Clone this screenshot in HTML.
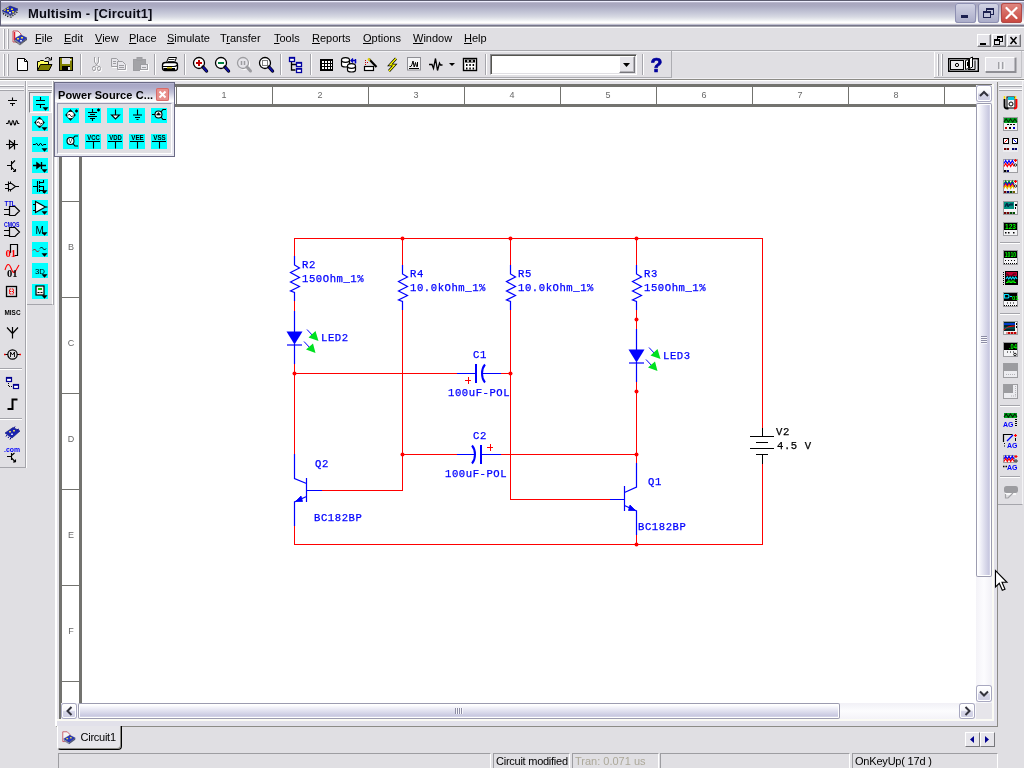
<!DOCTYPE html>
<html lang="en">
<head>
<meta charset="utf-8">
<title>Multisim - [Circuit1]</title>
<style>
html,body{margin:0;padding:0;}
body{width:1024px;height:768px;overflow:hidden;background:#e0dfe3;font-family:"Liberation Sans",sans-serif;font-size:11px;color:#000;position:relative;}
.a{position:absolute;}
#title{left:0;top:0;width:1024px;height:28px;background:linear-gradient(to bottom,#5c5c70 0,#5c5c70 1px,#eeeeff 1px,#eeeeff 2px,#b8b6cc 2px,#b8b6cc 3px,#a8a6be 3px,#abaac2 6px,#b6b7cc 9px,#c6c8d8 13px,#d8dae3 17px,#eceef1 20px,#ffffff 22px,#ffffff 23px,#f0eeee 23px,#f0eeee 24px,#c0c0d0 24px,#c0c0d0 25px,#77778a 25px,#77778a 26px,#a4a4ac 26px,#a4a4ac 27px,#ffffff 27px,#ffffff 28px);}
#title .t{left:28px;top:6px;font-weight:bold;font-size:13px;line-height:16px;white-space:nowrap;color:#0a0a14;letter-spacing:0.150px;}
.menu span{position:absolute;top:32px;line-height:13px;font-size:11px;white-space:nowrap;}
.menu u{text-decoration:underline;text-underline-offset:1px;}
.hl{height:1px;}
.vl{width:1px;}
.mono{font-family:"Liberation Mono",monospace;font-size:11.67px;line-height:12px;white-space:nowrap;color:#0000ff;font-weight:bold;}
.cy{position:absolute;width:16px;height:15px;background:#00ffff;}
.st{position:absolute;top:753px;height:15px;border-top:1px solid #9d9da1;border-left:1px solid #9d9da1;border-right:1px solid #fff;box-sizing:border-box;line-height:14px;padding-left:2px;white-space:nowrap;overflow:hidden;}
.rl{position:absolute;font-size:9px;color:#686868;line-height:10px;text-align:center;width:12px;}
.mb{top:34px;width:14px;height:13px;box-sizing:border-box;background:#e6e5ea;border:1px solid;border-color:#fff #77777c #77777c #fff;box-shadow:inset -1px -1px 0 #b4b3b8;}
.sbb{width:14px;height:15px;box-sizing:border-box;border:1px solid #fff;border-radius:2px;background:linear-gradient(to bottom,#ffffff 0,#f4f4fa 45%,#d6d6e8 55%,#cfcfe3 100%);box-shadow:0 0 0 1px #a8a8c0;}
svg{position:absolute;overflow:visible;}
</style>
</head>
<body>
<div id="root" style="position:absolute;left:0;top:0;width:1024px;height:768px;overflow:hidden;will-change:transform;">
<!-- title bar -->
<div id="title" class="a">
<svg style="left:1px;top:3px" width="20" height="18" viewBox="0 0 20 18">
<polygon points="1,8 9,3 17,6 9,12" fill="#1c28b4" stroke="#10186a" stroke-width="0.6"/>
<polygon points="1,8 9,12 9,13.500 1,9.500" fill="#8088a8"/>
<polygon points="9,12 17,6 17,7.500 9,13.500" fill="#4a5078"/>
<path d="M2,10.500L8.500,14.500M9.500,14.500L16.500,9" stroke="#101010" stroke-width="1.200" stroke-dasharray="1.200,1.300" fill="none"/>
<path d="M3,7.500L9,4" stroke="#e8dc30" stroke-width="1.300" stroke-dasharray="2,1.500"/>
<rect x="6" y="7" width="2" height="1.500" fill="#e8dc30"/><rect x="10" y="5.500" width="2" height="1.500" fill="#e8dc30"/><rect x="11" y="8" width="2" height="1.500" fill="#e8dc30"/><rect x="8" y="9" width="2" height="1.500" fill="#c8d0ff"/>
</svg>
<div class="a" style="left:0;top:0;width:1px;height:26px;background:#606078;"></div>
<div class="a t">Multisim - [Circuit1]</div>
<!-- caption buttons -->
<div class="a" style="left:955px;top:3px;width:21px;height:20px;border-radius:3px;background:linear-gradient(#d4d5e6,#a9abc8);box-shadow:inset 0 0 0 1px #8e90b2;"></div>
<div class="a" style="left:961px;top:15px;width:7px;height:3px;background:#1c2050;"></div>
<div class="a" style="left:978px;top:3px;width:21px;height:20px;border-radius:3px;background:linear-gradient(#d4d5e6,#a9abc8);box-shadow:inset 0 0 0 1px #8e90b2;"></div>
<svg style="left:978px;top:3px" width="21" height="20"><rect x="8.5" y="5.5" width="7" height="6" fill="none" stroke="#1c2050"/><rect x="8" y="5" width="8" height="2" fill="#1c2050"/><rect x="5.5" y="8.5" width="7" height="6" fill="#c0c2d8" stroke="#1c2050"/><rect x="5" y="8" width="8" height="2" fill="#1c2050"/></svg>
<div class="a" style="left:1001px;top:3px;width:21px;height:20px;border-radius:3px;background:linear-gradient(#e08a84,#c8453c);box-shadow:inset 0 0 0 1px #b04a48;"></div>
<svg style="left:1001px;top:3px" width="21" height="20"><path d="M5.5,5 L15.5,15 M15.5,5 L5.5,15" stroke="#fff" stroke-width="2.2" stroke-linecap="round"/></svg>
</div>
<!-- menu bar -->
<div class="a hl" style="left:0;top:50px;width:1024px;background:#a9a9ae;"></div>
<div class="a hl" style="left:0;top:51px;width:1024px;background:#f2f2f5;"></div>
<div class="a" style="left:3px;top:29px;width:1px;height:20px;background:#fff;border-right:1px solid #a5a5ab;"></div>
<div class="a" style="left:7px;top:29px;width:1px;height:20px;background:#fff;border-right:1px solid #a5a5ab;"></div>
<svg style="left:10.500px;top:29px" width="18" height="18" viewBox="0 0 18 18">
<path d="M2,2 h5 l3,3 v8 h-8 z" fill="#f4f4f4" stroke="#c03040" stroke-width="0.8"/>
<polygon points="3,10 10,6 16,9 9,14" fill="#2838c0" stroke="#18206a" stroke-width="0.5"/>
<polygon points="3,10 9,14 9,15.500 3,11.500" fill="#8088a0"/><polygon points="9,14 16,9 16,10.500 9,15.500" fill="#505878"/><path d="M3.500,12L9,16L16,10.500" stroke="#101010" stroke-width="1" stroke-dasharray="1.200,1.300" fill="none"/><path d="M3.500,3v8" stroke="#e02030" stroke-width="1.500"/>
<rect x="6" y="9" width="2" height="1.5" fill="#f0e040"/><rect x="10" y="8" width="2" height="1.5" fill="#f0e040"/><rect x="9" y="11" width="2" height="1.5" fill="#d0d8ff"/>
</svg>
<div class="menu">
<span style="left:35px"><u>F</u>ile</span>
<span style="left:64px"><u>E</u>dit</span>
<span style="left:95px"><u>V</u>iew</span>
<span style="left:129px"><u>P</u>lace</span>
<span style="left:167px"><u>S</u>imulate</span>
<span style="left:220px">T<u>r</u>ansfer</span>
<span style="left:274px"><u>T</u>ools</span>
<span style="left:312px"><u>R</u>eports</span>
<span style="left:363px"><u>O</u>ptions</span>
<span style="left:413px"><u>W</u>indow</span>
<span style="left:464px"><u>H</u>elp</span>
</div>
<!-- MDI child buttons -->
<div class="a mb" style="left:977px;"></div><div class="a mb" style="left:992px;"></div><div class="a mb" style="left:1007px;"></div>
<svg style="left:977px;top:34px" width="44" height="13">
<rect x="3" y="9" width="6" height="2" fill="#000"/>
<rect x="20.5" y="2.5" width="5" height="5" fill="none" stroke="#000"/><rect x="20" y="2" width="6" height="2" fill="#000"/>
<rect x="17.5" y="5.5" width="5" height="5" fill="#e6e5ea" stroke="#000"/><rect x="17" y="5" width="6" height="2" fill="#000"/>
<path d="M33.5,3 L39.5,10 M39.5,3 L33.5,10" stroke="#000" stroke-width="1.5"/>
</svg>
<!-- main toolbar -->
<div class="a hl" style="left:0;top:77px;width:672px;background:#adadb2;"></div>
<div class="a vl" style="left:671px;top:51px;height:27px;background:#adadb2;"></div>
<div class="a hl" style="left:934px;top:77px;width:88px;background:#adadb2;"></div>
<div class="a vl" style="left:1021px;top:51px;height:27px;background:#c4c4c8;"></div>
<div class="a vl" style="left:934px;top:52px;height:25px;background:#fff;"></div>
<div class="a hl" style="left:0;top:78px;width:1024px;background:#f0eff3;"></div>
<div class="a hl" style="left:0;top:79px;width:1024px;background:#8c8b86;"></div>
<div class="a" style="left:0;top:80px;width:1024px;height:4px;background:#e8e7ec;"></div>
<div class="a" style="left:3px;top:54px;width:1px;height:22px;background:#fff;border-right:1px solid #a5a5ab;"></div>
<div class="a" style="left:7px;top:54px;width:1px;height:22px;background:#fff;border-right:1px solid #a5a5ab;"></div>
<svg style="left:0;top:52px" width="680" height="26" viewBox="0 52 680 26">
<g id="seps" stroke="#a5a5ab"><path d="M80.5,54v21M154.5,54v21M184.5,54v21M280.5,54v21M310.5,54v21M485.5,54v21M642.5,54v21"/></g>
<g stroke="#fff"><path d="M81.5,54v21M155.5,54v21M185.5,54v21M281.5,54v21M311.5,54v21M486.5,54v21M643.5,54v21"/></g>
<!-- new -->
<path d="M17.5,58.5 h7 l3,3 v9 h-10 z" fill="#fff" stroke="#000"/><path d="M24.5,58.5 v3 h3" fill="none" stroke="#000"/>
<!-- open -->
<path d="M37.5,70.500 v-9 h2 l1,-1 h3 l1,1 h4 v3" fill="#ffff60" stroke="#000"/><path d="M37.500,70.500 l3,-6 h11.500 l-3,6 z" fill="#808000" stroke="#000"/><path d="M45,58.5 q3,-2.500 5.500,0.500 M51.500,57 v3 h-3" fill="none" stroke="#000"/>
<!-- save -->
<rect x="59.500" y="57.500" width="13" height="13" fill="#808000" stroke="#000"/><rect x="62" y="58" width="8" height="6" fill="#e0dfe3"/><rect x="62" y="66" width="8" height="5" fill="#000"/><rect x="68" y="67" width="2" height="3" fill="#e0dfe3"/><rect x="70" y="59" width="1.500" height="1.500" fill="#fff"/>
<!-- cut -->
<g fill="none" stroke="#fff" transform="translate(1,1)"><path d="M94.500,57 v5 l3,4 M98.500,57 v5 l-3,4"/><ellipse cx="94" cy="68.500" rx="1.500" ry="2.200"/><ellipse cx="99" cy="68.500" rx="1.500" ry="2.200"/></g>
<g fill="none" stroke="#9d9da1"><path d="M94.500,57 v5 l3,4 M98.500,57 v5 l-3,4"/><ellipse cx="94" cy="68.500" rx="1.500" ry="2.200"/><ellipse cx="99" cy="68.500" rx="1.500" ry="2.200"/></g>
<!-- copy -->
<g fill="#e6e5ea" stroke="#fff" transform="translate(1,1)"><path d="M111.500,58.500 h5 l2,2 v6 h-7 z M117.500,61.500 h5 l3,3 v5 h-8 z"/></g>
<g fill="#e6e5ea" stroke="#9d9da1"><path d="M111.500,58.500 h5 l2,2 v6 h-7 z"/><path d="M117.500,61.500 h5 l3,3 v5 h-8 z"/><path d="M113,61.500h3M113,63.500h3M119,65.500h5M119,67.500h5" /></g>
<!-- paste -->
<g><rect x="133.500" y="59.500" width="12" height="11" fill="#a3a3a7" stroke="#9d9da1"/><rect x="137" y="57.500" width="5" height="3" fill="#a3a3a7" stroke="#9d9da1"/><rect x="140.500" y="64.500" width="8" height="6" fill="#e6e5ea" stroke="#fff"/><rect x="140.500" y="64.500" width="7" height="5" fill="#e6e5ea" stroke="#9d9da1"/><path d="M142,67.500h4" stroke="#9d9da1"/></g>
<!-- print -->
<g><path d="M166.500,62.500 l2,-5 h8 l-2,5" fill="#fff" stroke="#000"/><path d="M168.500,59.500h6M168,61.500h6" stroke="#000" stroke-width="0.800"/><path d="M162.500,65 q0,-2.500 3,-2.500 h9.500 q2.500,0 2.500,2.500 v3 q0,2.500 -2.500,2.500 h-10 q-2.500,0 -2.500,-2.500 z" fill="#fff" stroke="#000" stroke-width="1.300"/><path d="M163,66.500 h11 q2,0 3.500,-1.500" fill="none" stroke="#000" stroke-width="1.100"/><path d="M163.500,69 h11.500" stroke="#000" stroke-width="2"/><rect x="167" y="67.200" width="5" height="1.200" fill="#e0d000"/></g>
<!-- zoom in -->
<g><circle cx="199" cy="63" r="5.500" fill="#fff" stroke="#000" stroke-width="1.300"/><path d="M199,60v6M196,63h6" stroke="#c00000" stroke-width="2"/><path d="M203,67 l3.500,4" stroke="#000" stroke-width="3.400" stroke-linecap="round"/><path d="M203.500,67.500 l3,3.500" stroke="#1010a0" stroke-width="2" stroke-linecap="round"/></g>
<!-- zoom out -->
<g><circle cx="221" cy="63" r="5.500" fill="#fff" stroke="#000" stroke-width="1.300"/><path d="M218,63h6" stroke="#008040" stroke-width="2"/><path d="M225,67 l3.500,4" stroke="#000" stroke-width="3.400" stroke-linecap="round"/><path d="M225.500,67.500 l3,3.500" stroke="#1010a0" stroke-width="2" stroke-linecap="round"/></g>
<!-- zoom area (disabled) -->
<g><circle cx="244" cy="64" r="5.500" fill="none" stroke="#fff" stroke-width="1.300"/><circle cx="243" cy="63" r="5.500" fill="#e6e5ea" stroke="#9d9da1" stroke-width="1.300"/><path d="M241.500,61v4M244.500,61v4" stroke="#9d9da1" stroke-width="1.500"/><path d="M247,67 l3.500,4" stroke="#9d9da1" stroke-width="3" stroke-linecap="round"/></g>
<!-- zoom fit -->
<g><circle cx="265" cy="63" r="5.500" fill="#fff" stroke="#000" stroke-width="1.300"/><rect x="262.500" y="60.500" width="5" height="5" fill="#fff" stroke="#808080"/><path d="M269,67 l3.500,4" stroke="#000" stroke-width="3.400" stroke-linecap="round"/><path d="M269.500,67.500 l3,3.500" stroke="#1010a0" stroke-width="2" stroke-linecap="round"/></g>
<!-- hierarchy -->
<g><path d="M291.500,61 v9 h4 M291.500,64.500 h5" fill="none" stroke="#000" stroke-width="1.300"/><rect x="289.500" y="57.500" width="5" height="4" fill="#fff" stroke="#0000a0" stroke-width="1.300"/><rect x="296.500" y="62.500" width="5" height="4" fill="#fff" stroke="#0000a0" stroke-width="1.300"/><rect x="296.500" y="68.500" width="5" height="4" fill="#fff" stroke="#0000a0" stroke-width="1.300"/><path d="M289,58h6M296,63h6M296,69h6" stroke="#0000a0" stroke-width="1.600"/></g>
<!-- spreadsheet -->
<g><rect x="320" y="59" width="13" height="12" fill="#000"/><g fill="#fff"><rect x="322" y="61" width="2" height="2"/><rect x="325" y="61" width="2" height="2"/><rect x="328" y="61" width="2" height="2"/><rect x="331" y="61" width="1" height="2"/><rect x="322" y="64" width="2" height="2"/><rect x="325" y="64" width="2" height="2"/><rect x="328" y="64" width="2" height="2"/><rect x="331" y="64" width="1" height="2"/><rect x="322" y="67" width="2" height="2"/><rect x="325" y="67" width="2" height="2"/><rect x="328" y="67" width="2" height="2"/><rect x="331" y="67" width="1" height="2"/></g></g>
<!-- database -->
<g fill="#fff" stroke="#000" stroke-width="1.200"><path d="M341.500,60 v5 a4,2 0 0 0 8,0 v-5"/><ellipse cx="345.500" cy="60" rx="4" ry="2.300"/><path d="M347.500,66 v4 a4,2 0 0 0 8,0 v-4"/><ellipse cx="351.500" cy="66" rx="4" ry="2.300"/></g><path d="M351,60.500 h4.500 v3 M353,58.500 l-2,2 l2,2" fill="none" stroke="#0000c0" stroke-width="1.300"/><path d="M355.500,59v4" stroke="#0000c0" stroke-width="1.300"/>
<!-- edit -->
<g><rect x="364.500" y="66.500" width="9" height="4" fill="#fff" stroke="#000" stroke-width="1.200"/><path d="M369,59 l7.500,8" stroke="#000" stroke-width="2.200"/><path d="M368,58.500 l2,2" stroke="#e0d000" stroke-width="2"/><path d="M365.500,60v6" stroke="#c00000" stroke-dasharray="1,1"/><path d="M367.500,62v1" stroke="#c00000"/></g>
<!-- lightning -->
<g><path d="M396,58.500 l-6,6.500 h4.500 l-5.500,6" fill="none" stroke="#000" stroke-width="2.600"/><path d="M396,58.500 l-6,6.500 h4.500 l-5.500,6" fill="none" stroke="#ffff00" stroke-width="1.200"/></g>
<!-- grapher -->
<g><rect x="407.500" y="57.500" width="13" height="12.500" fill="#f4f4f6" stroke="#8e8e94"/><path d="M409,68.500 h10" stroke="#000"/><path d="M409.500,66.500 h1.500 l1,-2 l1,-3.500 l1.200,6 l1.300,-4.500 l1,4 h1 v-4.500" fill="none" stroke="#000" stroke-width="1"/></g>
<!-- postprocessor -->
<path d="M429,64.500 h3 l1.500,4 l2,-10 l2,12 l2,-7.500 l1,2 h2" fill="none" stroke="#000" stroke-width="1.300"/>
<path d="M449,63 h6 l-3,3 z" fill="#000"/>
<!-- calculator -->
<g><rect x="463.500" y="58.500" width="13" height="12" fill="#fff" stroke="#000" stroke-width="1.400"/><rect x="465" y="59.500" width="10" height="3" fill="#000"/><circle cx="468" cy="61" r="0.900" fill="#fff"/><circle cx="472" cy="61" r="0.900" fill="#fff"/><g fill="#000"><rect x="466" y="64" width="1.500" height="2"/><rect x="469.300" y="64" width="1.500" height="2"/><rect x="472.600" y="64" width="1.500" height="2"/><rect x="466" y="67.500" width="1.500" height="2"/><rect x="469.300" y="67.500" width="1.500" height="2"/><rect x="472.600" y="67.500" width="1.500" height="2"/></g></g>
<!-- help -->
<text x="650.500" y="72" font-family="Liberation Sans, sans-serif" font-weight="bold" font-size="19.500" fill="#00009c" stroke="#00009c" stroke-width="0.700">?</text>
</svg>
<!-- combo -->
<div class="a" style="left:490px;top:54px;width:147px;height:21px;box-sizing:border-box;background:#fff;border:1px solid;border-color:#8a8a8e #fff #fff #8a8a8e;box-shadow:inset 1px 1px 0 #55554f,inset -1px -1px 0 #e0dfe3;"></div>
<div class="a" style="left:619px;top:56px;width:16px;height:17px;box-sizing:border-box;background:#e6e5ea;border:1px solid;border-color:#fff #77777c #77777c #fff;box-shadow:inset -1px -1px 0 #b4b3b8;"></div>
<svg style="left:619px;top:56px" width="16" height="17"><path d="M4,7 h7 l-3.500,4 z" fill="#000"/></svg>
<!-- simulation switch toolbar -->
<div class="a" style="left:937px;top:54px;width:1px;height:22px;background:#fff;border-right:1px solid #a5a5ab;"></div>
<div class="a" style="left:941px;top:54px;width:1px;height:22px;background:#fff;border-right:1px solid #a5a5ab;"></div>
<svg style="left:944px;top:52px" width="80" height="26" viewBox="944 52 80 26">
<rect x="948.700" y="58.700" width="29.600" height="12.600" fill="#e8e8ec" stroke="#000" stroke-width="1.400"/>
<rect x="950.500" y="60.500" width="13" height="9" fill="#ececf0" stroke="#000"/>
<circle cx="957" cy="65" r="1.600" fill="#fff" stroke="#000"/>
<path d="M965.500,60.500 l3,-1 v9 l-3,1 z" fill="#fff" stroke="#000"/><path d="M969.500,58.500 l3,-1.500 v10 l-3,1.500 z" fill="#fff" stroke="#000"/><path d="M968,69.500 h7 v-9" fill="none" stroke="#000"/><path d="M967.500,62v4" stroke="#000"/>
<rect x="985.500" y="57.500" width="30" height="15" fill="#e6e5ea" stroke="#fff"/><path d="M985.500,72 h30 v-14.500" fill="none" stroke="#8e8e94" stroke-width="2"/>
<path d="M999,62v7M1003,62v7" stroke="#a0a0a6" stroke-width="2"/><path d="M1000,62v8M1004,62v8" stroke="#fff" stroke-width="1"/>
</svg>
<!-- workspace frame -->
<div class="a hl" style="left:0;top:80px;width:1024px;background:#fff;"></div>
<!-- left toolbar 1 -->
<div class="a" style="left:0;top:81px;width:25px;height:386px;background:#e0dfe3;border-right:1px solid #a5a5ab;border-bottom:1px solid #a5a5ab;"></div>
<div class="a vl" style="left:26px;top:81px;height:387px;background:#fff;"></div>
<div class="a hl" style="left:0;top:85px;width:24px;background:#fff;"></div><div class="a hl" style="left:0;top:86px;width:24px;background:#a5a5ab;"></div>
<div class="a hl" style="left:0;top:89px;width:24px;background:#fff;"></div><div class="a hl" style="left:0;top:90px;width:24px;background:#a5a5ab;"></div>
<!-- left toolbar 2 -->
<div class="a" style="left:27px;top:81px;width:25px;height:223px;background:#e0dfe3;border-right:1px solid #fff;border-bottom:1px solid #a5a5ab;"></div>
<div class="a vl" style="left:53px;top:81px;height:224px;background:#a5a5ab;"></div>
<div class="a hl" style="left:28px;top:85px;width:24px;background:#fff;"></div><div class="a hl" style="left:28px;top:86px;width:24px;background:#a5a5ab;"></div>
<div class="a hl" style="left:28px;top:89px;width:24px;background:#fff;"></div><div class="a hl" style="left:28px;top:90px;width:24px;background:#a5a5ab;"></div>
<!-- child window frame -->
<div class="a" style="left:55px;top:82px;width:940px;height:644px;background:#e6e5ea;border-left:2px solid #fff;border-right:1px solid #8c8b86;border-bottom:1px solid #8c8b86;box-sizing:content-box;"></div>
<!-- rulers -->
<div class="a" style="left:60px;top:84px;width:916px;height:23px;background:#fff;border-top:3px solid #73736f;border-bottom:3px solid #73736f;box-sizing:border-box;"></div>
<div class="a" style="left:59px;top:84px;width:23px;height:619px;background:#fff;border-left:3px solid #73736f;border-right:3px solid #73736f;box-sizing:border-box;"></div>
<div class="a" style="left:59px;top:84px;width:23px;height:3px;background:#73736f;"></div>
<div class="a" style="left:59px;top:700px;width:2px;height:19px;background:#73736f;"></div>
<!-- canvas -->
<div class="a" style="left:82px;top:107px;width:894px;height:596px;background:#fff;"></div>
<div class="a vl" style="left:176px;top:87px;height:17px;background:#73736f;"></div>
<div class="a vl" style="left:272px;top:87px;height:17px;background:#73736f;"></div>
<div class="a vl" style="left:368px;top:87px;height:17px;background:#73736f;"></div>
<div class="a vl" style="left:464px;top:87px;height:17px;background:#73736f;"></div>
<div class="a vl" style="left:560px;top:87px;height:17px;background:#73736f;"></div>
<div class="a vl" style="left:656px;top:87px;height:17px;background:#73736f;"></div>
<div class="a vl" style="left:752px;top:87px;height:17px;background:#73736f;"></div>
<div class="a vl" style="left:848px;top:87px;height:17px;background:#73736f;"></div>
<div class="a vl" style="left:944px;top:87px;height:17px;background:#73736f;"></div>
<div class="rl" style="left:218px;top:90px;">1</div>
<div class="rl" style="left:314px;top:90px;">2</div>
<div class="rl" style="left:410px;top:90px;">3</div>
<div class="rl" style="left:506px;top:90px;">4</div>
<div class="rl" style="left:602px;top:90px;">5</div>
<div class="rl" style="left:698px;top:90px;">6</div>
<div class="rl" style="left:794px;top:90px;">7</div>
<div class="rl" style="left:890px;top:90px;">8</div>
<div class="a hl" style="left:62px;top:201px;width:17px;background:#73736f;"></div>
<div class="a hl" style="left:62px;top:297px;width:17px;background:#73736f;"></div>
<div class="a hl" style="left:62px;top:393px;width:17px;background:#73736f;"></div>
<div class="a hl" style="left:62px;top:489px;width:17px;background:#73736f;"></div>
<div class="a hl" style="left:62px;top:585px;width:17px;background:#73736f;"></div>
<div class="a hl" style="left:62px;top:681px;width:17px;background:#73736f;"></div>
<div class="rl" style="left:65px;top:242px;">B</div>
<div class="rl" style="left:65px;top:338px;">C</div>
<div class="rl" style="left:65px;top:434px;">D</div>
<div class="rl" style="left:65px;top:530px;">E</div>
<div class="rl" style="left:65px;top:626px;">F</div>
<!-- vertical scrollbar -->
<div class="a" style="left:976px;top:85px;width:16px;height:618px;background:linear-gradient(to right,#f4f3f8,#fcfcfe 50%,#f1f0f6);"></div>
<div class="a hl" style="left:976px;top:84px;width:16px;background:#73736f;"></div>
<div class="a sbb" style="left:977px;top:86px;"></div>
<div class="a sbb" style="left:977px;top:686px;"></div>
<div class="a" style="left:977px;top:104px;width:14px;height:472px;box-sizing:border-box;border:1px solid #fff;border-radius:1px;background:linear-gradient(to right,#ffffff,#ececf6 30%,#c8c8e0 90%,#d8d8ea);box-shadow:0 0 0 1px #9c9cb0;"></div>
<div class="a" style="left:981px;top:336px;width:6px;height:8px;background:repeating-linear-gradient(to bottom,#8c8ca4 0,#8c8ca4 1px,#f8f8fc 1px,#f8f8fc 2px);"></div>
<div class="a" style="left:992px;top:84px;width:2px;height:637px;background:#fbfbf4;"></div>
<div class="a" style="left:994px;top:84px;width:3px;height:642px;background:#e2e1ea;"></div>
<div class="a" style="left:57px;top:719px;width:937px;height:2px;background:#fbfbf4;"></div>
<div class="a" style="left:57px;top:721px;width:940px;height:5px;background:#e2e1ea;"></div>
<!-- horizontal scrollbar -->
<div class="a" style="left:61px;top:703px;width:915px;height:16px;background:linear-gradient(to bottom,#f1f0f6,#fcfcfe 50%,#f4f3f8);"></div>
<div class="a sbb" style="left:62px;top:704px;height:14px;"></div>
<div class="a sbb" style="left:960px;top:704px;height:14px;"></div>
<div class="a" style="left:79px;top:704px;width:760px;height:14px;box-sizing:border-box;border:1px solid #fff;border-radius:1px;background:linear-gradient(to bottom,#ffffff,#ececf6 30%,#c8c8e0 90%,#d8d8ea);box-shadow:0 0 0 1px #9c9cb0;"></div>
<div class="a" style="left:455px;top:708px;width:8px;height:6px;background:repeating-linear-gradient(to right,#8c8ca4 0,#8c8ca4 1px,#f8f8fc 1px,#f8f8fc 2px);"></div>
<div class="a" style="left:976px;top:703px;width:16px;height:16px;background:#e6e5ea;"></div>
<svg style="left:0;top:0" width="1024" height="768">
<g fill="none" stroke="#33333d" stroke-width="2">
<path d="M980,96 l4,-4 l4,4"/><path d="M980,691.500 l4,4 l4,-4"/>
<path d="M71.500,707 l-4,4 l4,4"/><path d="M965.500,707 l4,4 l-4,4"/>
</g></svg>
<!-- circuit -->
<svg style="left:0;top:0" width="1024" height="768" viewBox="0 0 1024 768">
<g fill="none" stroke="#ff0000" stroke-width="1" shape-rendering="crispEdges">
<path d="M294,238.500H763"/>
<path d="M294.500,238V256M294.500,301V311M294.500,364V454M294.500,526V545"/>
<path d="M294,373.500H457M501,373.500H511"/>
<path d="M402.500,238V265M402.500,310V491"/>
<path d="M322,490.500H403"/>
<path d="M402,454.500H457M501,454.500H637"/>
<path d="M510.500,238V265M510.500,310V500"/>
<path d="M510,499.500H610"/>
<path d="M636.500,238V265M636.500,310V329M636.500,382V464M636.500,535V545"/>
<path d="M294,544.500H763"/>
<path d="M762.500,238V428M762.500,464V545"/>
</g>
<g fill="#ff0000">
<circle cx="402.500" cy="238.500" r="2"/><circle cx="510.500" cy="238.500" r="2"/><circle cx="636.500" cy="238.500" r="2"/>
<circle cx="294.500" cy="373.500" r="2"/><circle cx="510.500" cy="373.500" r="2"/>
<circle cx="402.500" cy="454.500" r="2"/><circle cx="636.500" cy="454.500" r="2"/>
<circle cx="636.500" cy="319.500" r="2"/><circle cx="636.500" cy="391.500" r="2"/><circle cx="636.500" cy="544.500" r="2"/>
</g>
<g fill="none" stroke="#ff0000" stroke-width="1" shape-rendering="crispEdges"><path d="M465,380.500h6M468.500,377v7M487,447.500h6M490.500,444v7"/></g>
<g transform="translate(294,256)"><path d="M0.500,0V9L5.500,12L-3.500,16.500L5.500,21.500L-3.500,26L5.500,30.500L-3.500,35L0.500,36.500V45" fill="none" stroke="#0000ff" stroke-width="1.200"/></g><g transform="translate(402,265)"><path d="M0.500,0V9L5.500,12L-3.500,16.500L5.500,21.500L-3.500,26L5.500,30.500L-3.500,35L0.500,36.500V45" fill="none" stroke="#0000ff" stroke-width="1.200"/></g><g transform="translate(510,265)"><path d="M0.500,0V9L5.500,12L-3.500,16.500L5.500,21.500L-3.500,26L5.500,30.500L-3.500,35L0.500,36.500V45" fill="none" stroke="#0000ff" stroke-width="1.200"/></g><g transform="translate(636,265)"><path d="M0.500,0V9L5.500,12L-3.500,16.500L5.500,21.500L-3.500,26L5.500,30.500L-3.500,35L0.500,36.500V45" fill="none" stroke="#0000ff" stroke-width="1.200"/></g>
<g transform="translate(294,311)"><path d="M0.500,0V21M0.500,33V53" fill="none" stroke="#0000ff" stroke-width="1.200"/><path d="M-7.500,20.500H8.500L0.500,33.500Z" fill="#0000ff"/><path d="M-7,34H8" stroke="#0000ff" stroke-width="1.200"/><path d="M13,18.500L20,26M10,30.500L17,38" stroke="#0000ff" stroke-width="1"/><path d="M14.500,26.500L21.500,20L24.500,30Z M12,38.500L19,32.500L21.500,42Z" fill="#00e020"/></g><g transform="translate(636,329)"><path d="M0.500,0V21M0.500,33V53" fill="none" stroke="#0000ff" stroke-width="1.200"/><path d="M-7.500,20.500H8.500L0.500,33.500Z" fill="#0000ff"/><path d="M-7,34H8" stroke="#0000ff" stroke-width="1.200"/><path d="M13,18.500L20,26M10,30.500L17,38" stroke="#0000ff" stroke-width="1"/><path d="M14.500,26.500L21.500,20L24.500,30Z M12,38.500L19,32.500L21.500,42Z" fill="#00e020"/></g>
<!-- C1 -->
<g fill="none" stroke="#0000ff"><path d="M457,373.500H475M483,373.500H501" stroke-width="1.200"/><path d="M476,364V383" stroke-width="2"/><path d="M485,364.500Q482,368 482,373.500Q482,379 485,382.500" stroke-width="2"/></g>
<!-- C2 -->
<g fill="none" stroke="#0000ff"><path d="M457,454.500H475M482,454.500H501" stroke-width="1.200"/><path d="M481,445V464" stroke-width="2"/><path d="M472,445.500Q475,449 475,454.500Q475,460 472,463.500" stroke-width="2"/></g>
<!-- Q2 -->
<g fill="none" stroke="#0000ff" stroke-width="1.200"><path d="M294.500,454V478.500L306.500,483.500M306.500,478V502M306.500,490.500H322M306.500,496.500L294.500,502V526"/></g>
<path d="M295.500,501.500L301,496L302.500,501.500Z" fill="#0000ff" stroke="#0000ff" stroke-width="0.800"/>
<!-- Q1 -->
<g fill="none" stroke="#0000ff" stroke-width="1.200"><path d="M636.500,463V487L624.500,492.500M624.500,486V511M610,499.500H624.500M624.500,505.500L636.500,511V535"/></g>
<path d="M635.500,510.500L630,505L628.500,510.500Z" fill="#0000ff" stroke="#0000ff" stroke-width="0.800"/>
<!-- V2 -->
<g fill="none" stroke="#000" stroke-width="1" shape-rendering="crispEdges"><path d="M762.500,428V436M750,436.500H774M756,442.500H768M750,448.500H774M756,454.500H768M762.500,455V464"/></g>
<g font-family="Liberation Mono, monospace" font-size="10.600" fill="#0000ff" stroke="#0000ff" stroke-width="0.250" style="letter-spacing:0.550px">
<text x="302" y="268">R2</text><text x="302" y="282">150Ohm_1%</text>
<text x="410" y="277">R4</text><text x="410" y="291">10.0kOhm_1%</text>
<text x="518" y="277">R5</text><text x="518" y="291">10.0kOhm_1%</text>
<text x="644" y="277">R3</text><text x="644" y="291">150Ohm_1%</text>
<text x="321" y="341">LED2</text><text x="663" y="359">LED3</text>
<text x="473" y="358">C1</text><text x="448" y="396">100uF-POL</text>
<text x="473" y="439">C2</text><text x="445" y="477">100uF-POL</text>
<text x="315" y="467">Q2</text><text x="314" y="521">BC182BP</text>
<text x="648" y="485">Q1</text><text x="638" y="530">BC182BP</text>
<text x="776" y="435" fill="#000" stroke="#000">V2</text><text x="777" y="449" fill="#000" stroke="#000">4.5 V</text>
</g>
</svg>
<!-- Power Source Components floating panel -->
<div class="a" style="left:54px;top:82px;width:121px;height:75px;box-sizing:border-box;border:1px solid #6a6a86;background:#e0dfe3;"></div>
<div class="a" style="left:55px;top:83px;width:119px;height:19px;background:linear-gradient(to bottom,#c4c4dc 0,#a8a7c5 1px,#aeadca 5px,#c6c6da 10px,#e4e4ee 14px,#fff 18px);"></div>
<div class="a" style="left:55px;top:102px;width:119px;height:54px;box-sizing:border-box;border:2px solid #e8e8f0;border-top-width:1px;"></div>
<div class="a" style="left:57px;top:103px;width:115px;height:51px;box-sizing:border-box;border:1px solid #9a9ab0;border-color:#9a9ab0 #fff #fff #9a9ab0;"></div>
<div class="a" style="left:58px;top:89px;font-weight:bold;font-size:11px;line-height:13px;white-space:nowrap;letter-spacing:0.1px;" id="pst">Power Source C...</div>
<div class="a" style="left:156px;top:88px;width:13px;height:13px;border-radius:2px;background:#e8908c;box-shadow:inset 0 0 0 1px #d86a68;"></div>
<svg style="left:156px;top:88px" width="13" height="13"><path d="M3.500,3.500L9.500,9.500M9.500,3.500L3.500,9.500" stroke="#fff" stroke-width="2"/></svg>
<div class="cy" style="left:63px;top:108px"></div><div class="cy" style="left:85px;top:108px"></div><div class="cy" style="left:107px;top:108px"></div><div class="cy" style="left:129px;top:108px"></div><div class="cy" style="left:151px;top:108px"></div>
<div class="cy" style="left:63px;top:134px"></div><div class="cy" style="left:85px;top:134px"></div><div class="cy" style="left:107px;top:134px"></div><div class="cy" style="left:129px;top:134px"></div><div class="cy" style="left:151px;top:134px"></div>
<svg style="left:0;top:0" width="200" height="160" viewBox="0 0 200 160">
<g fill="none" stroke="#000" stroke-width="1.100">
<!-- AC source -->
<path d="M70.500,109.500L75.500,115L70.500,120.500L65.500,115Z" fill="#000" stroke-width="0.600"/><circle cx="70.500" cy="115" r="3.300" fill="#fff" stroke="none"/><path d="M68,115.500q1.200,-2.800 2.500,0t2.500,0" stroke-width="0.900"/><path d="M76.500,109.500v3M75,111h3" stroke-width="1.300"/>
<!-- battery -->
<path d="M92.500,109v3M88,112.500h9M90,114.500h5M88,116.500h9M90,118.500h5M92.500,119v2"/><path d="M98.500,108.500v3M97,110h3" stroke-width="1.300"/>
<!-- ground arrow -->
<path d="M115.500,109.500v5M111.500,115h8l-4,4z" fill="#e8ffff"/>
<!-- ground -->
<path d="M137.500,109.500v5M133,115h9M135,117.500h5M136.500,119.500h2"/>
<!-- controlled source -->
<circle cx="158.500" cy="114.500" r="3.500" fill="#e8ffff"/><path d="M152,114.500h3M161,112l2,-2.500h3M161,117l2,2.500h3"/><path d="M156.500,115l2,-2.500l2,2.500z" fill="#000" stroke-width="0.600"/>
<!-- V source -->
<circle cx="70.500" cy="141" r="3.500" fill="#e8ffff"/><path d="M73,138.500l2,-2.500h3M73,143.500l2,2.500h3"/>
<!-- T bars -->
<path d="M86,141.500h14M93.500,142v6.500M108,141.500h14M115.500,142v6.500M130,141.500h14M137.500,142v6.500M152,141.500h14M159.500,142v6.500"/>
</g>
<g font-family="Liberation Sans, sans-serif" font-size="7" font-weight="bold" fill="#000" text-anchor="middle">
<text x="93.500" y="140" textLength="12.500" lengthAdjust="spacingAndGlyphs">VCC</text><text x="115.500" y="140" textLength="12.500" lengthAdjust="spacingAndGlyphs">VDD</text><text x="137.500" y="140" textLength="12.500" lengthAdjust="spacingAndGlyphs">VEE</text><text x="159.500" y="140" textLength="12.500" lengthAdjust="spacingAndGlyphs">VSS</text>
<text x="70.500" y="143" font-size="5" font-weight="normal">V</text>
</g>
</svg>
<!-- left toolbar 1 icons -->
<div class="a hl" style="left:0;top:368px;width:22px;background:#a5a5ab;"></div><div class="a hl" style="left:0;top:369px;width:22px;background:#fff;"></div>
<div class="a hl" style="left:0;top:418px;width:22px;background:#a5a5ab;"></div><div class="a hl" style="left:0;top:419px;width:22px;background:#fff;"></div>
<svg style="left:0;top:0" width="27" height="470" viewBox="0 0 27 470">
<g fill="none" stroke="#000" stroke-width="1.100">
<!-- source -->
<path d="M12.500,97.500v3M8,100.500h9M10,103.500h5M12.500,104v2"/>
<!-- resistor wavy -->
<path d="M6,123.500h2q1,-6 2.200,0q0.800,3 1.600,0q1,-6 2.200,0q0.800,3 1.600,0q1,-6 2.200,0h1.500"/>
<!-- diode -->
<path d="M6,144.500h12M9.500,140.500v8l5,-4zM14.500,140v9.500" stroke-width="1.200"/>
<!-- transistor -->
<path d="M7,165.500h4M11.500,161v9M11.500,164l3.500,-3.500M11.500,167l4,4.500M15.500,171.500v-2.500M15.500,171.500h-2.500"/>
<!-- analog buffer -->
<path d="M8.500,181.500v10M5,184.500h3.500M5,188.500h3.500M8.500,183.500h3l4,3l-4,3h-3M15.500,186.500h3.500M10.500,181.500v2M10.500,189.500v2"/>
<!-- TTL gate -->
<path d="M4,209.500h5M4,214.500h5M9.500,206.500h5.500l4.500,4.500l-4.500,4.500h-5.500z" stroke-width="1.200"/>
<!-- CMOS gate -->
<path d="M4,230.500h5M4,235.500h5M9.500,227.500h5.500l4.500,4.500l-4.500,4.500h-5.500z" stroke-width="1.200"/>
<!-- misc digital box -->
<path d="M10.500,253v-8.500h7v11h-3" stroke-width="1.200"/>
<!-- indicator -->
<rect x="6.500" y="286.500" width="10" height="10" stroke-width="1.300"/>
<!-- antenna -->
<path d="M12.500,327v11.500M7,327.500l5.500,6l5.500,-6" stroke-width="1.200"/>
<!-- motor -->
<circle cx="12.500" cy="354.500" r="4.700" stroke-width="1.200"/><path d="M5,354.500h3M17,354.500h3"/><path d="M10.500,357v-5l2,3l2,-3v5" stroke-width="0.900"/>
<!-- step -->
<path d="M7.500,409h5v-9.500h5" stroke-width="2"/>
<!-- small transistor -->
<path d="M7,456.500h4M11.500,453v7M11.500,455.500l3,-2.500M11.500,458l4,4M15.500,462v-2.500M15.500,462h-2.500"/>
</g>
<path d="M4,354.500h1.500M19.500,354.500h1.500" stroke="#ff0000" stroke-width="1.500"/>
<!-- indicator red 8 -->
<path d="M9.500,289h4v5h-4zM9.500,291.500h4" fill="none" stroke="#ff0000" stroke-width="1" stroke-dasharray="1.500,0.700"/>
<!-- red wave mixed -->
<path d="M5,270q3,-10 6,-2q2,6 4,4l4,-7" fill="none" stroke="#ff0000" stroke-width="1.100"/>
<!-- bus boxes -->
<g><rect x="6.500" y="377.500" width="5" height="4" fill="#fff" stroke="#000090" stroke-width="1.200"/><path d="M6,378h6" stroke="#000090" stroke-width="1.600"/><rect x="13.500" y="384.500" width="5" height="4" fill="#fff" stroke="#000090" stroke-width="1.200"/><path d="M13,385h6" stroke="#000090" stroke-width="1.600"/><path d="M8.500,383v3.500h4.500" fill="none" stroke="#000" stroke-dasharray="1,1"/></g>
<!-- chip -->
<g><polygon points="5,433 13,427.500 20,431 12,438" fill="#1a22b0" stroke="#0a1070" stroke-width="0.600"/><path d="M7,435l-1,1.500M9,436.500l-1,1.500M11,437.500l-1,2M14,428l1,-1.500M17,430l2,-1" stroke="#000090" stroke-width="1"/><rect x="9" y="431" width="2" height="1.500" fill="#e0d060"/><rect x="13" y="430" width="2" height="1.500" fill="#e0d060"/><rect x="11" y="433.500" width="2" height="1.500" fill="#c8d0ff"/></g>
<g font-family="Liberation Sans, sans-serif" font-weight="bold">
<text x="4.500" y="206" font-size="6.500" fill="#0000e0" textLength="11" lengthAdjust="spacingAndGlyphs">TTL</text>
<text x="4" y="227" font-size="6.500" fill="#0000e0" textLength="15.500" lengthAdjust="spacingAndGlyphs">CMOS</text>
<text x="5.500" y="257" font-size="9.500" fill="#ff0000" font-family="Liberation Serif, serif" textLength="10.500" lengthAdjust="spacingAndGlyphs">01</text>
<text x="7" y="277" font-size="9.500" fill="#000" font-family="Liberation Serif, serif" textLength="10.500" lengthAdjust="spacingAndGlyphs">01</text>
<text x="4.500" y="314.500" font-size="7.500" fill="#000" textLength="16" lengthAdjust="spacingAndGlyphs">MISC</text>
<text x="4" y="452" font-size="8" fill="#0000ff" textLength="16" lengthAdjust="spacingAndGlyphs">.com</text>
</g>
</svg>
<!-- left toolbar 2 icons -->
<div class="a" style="left:29px;top:92px;width:23px;height:21px;box-sizing:border-box;border:1px solid;border-color:#808086 #fff #fff #808086;background:#e8e7ec;"></div>
<div class="cy" style="left:33px;top:96px"></div>
<div class="cy" style="left:32px;top:116px"></div>
<div class="cy" style="left:32px;top:137px"></div>
<div class="cy" style="left:32px;top:158px"></div>
<div class="cy" style="left:32px;top:179px"></div>
<div class="cy" style="left:32px;top:200px"></div>
<div class="cy" style="left:32px;top:221px"></div>
<div class="cy" style="left:32px;top:242px"></div>
<div class="cy" style="left:32px;top:263px"></div>
<div class="cy" style="left:32px;top:284px"></div>
<svg style="left:0;top:0" width="60" height="310" viewBox="0 0 60 310">
<path d="M42.5,107.3h6l-3,3.500zM41.5,127.3h6l-3,3.500zM41.5,148.3h6l-3,3.500zM41.5,169.3h6l-3,3.500zM41.5,190.3h6l-3,3.500zM41.5,211.3h6l-3,3.500zM41.5,232.3h6l-3,3.500zM41.5,253.3h6l-3,3.500zM41.5,274.3h6l-3,3.500zM41.5,295.3h6l-3,3.500z" fill="#000"/>
<g fill="none" stroke="#000" stroke-width="1.100">
<path d="M40.500,97v3M36,100.500h9M36,104.500h9M40.500,105v3"/>
<path d="M39.500,117L44.500,122.500L39.500,128L34.500,122.500Z" fill="#000" stroke-width="0.600"/><circle cx="39.500" cy="122.500" r="3.300" fill="#fff" stroke="none"/><path d="M37,123q1.200,-2.800 2.500,0t2.500,0" stroke-width="0.900"/>
<path d="M33,144.500h2.500l1,-1.300l2,2.600l2,-2.600l2,2.600l1,-1.300h2.500" stroke-width="1"/>
<path d="M33,165.500h13M41.500,162v7" stroke-width="1.300"/><path d="M36.500,162v7l4.500,-3.500z" fill="#000" stroke-width="0.500"/>
<path d="M33,186.500h4M37.500,181v11M39.500,181v3M39.500,185v3M39.500,189v3M40,182.500h3.500v-2.500M40,190.500h3.500v2.500M40,186.500h3.500v4" stroke-width="1.100"/>
<path d="M35.500,201.500v11l10,-5.500z" fill="#e8ffff"/><path d="M33,204.500h2.500M33,210.500h2.500M45.500,207h2"/>
</g>
<text x="35.500" y="234" font-family="Liberation Sans, sans-serif" font-size="10" fill="#000">M</text>
<path d="M33,250.500q1.500,-3 3,0t3,0" fill="none" stroke="#c00000" stroke-width="1"/><path d="M40,248.500q1.500,-3 3,0t3,0" fill="none" stroke="#000" stroke-width="1"/>
<text x="35" y="273.500" font-family="Liberation Sans, sans-serif" font-size="7.500" fill="#000" textLength="10" lengthAdjust="spacingAndGlyphs">3D</text>
<rect x="36" y="286" width="8" height="9" fill="#f0f0f0" stroke="#000" stroke-width="1.200"/><rect x="38" y="288" width="4" height="2" fill="#00c000"/><path d="M37.500,292.500h2M40.500,292.500h2" stroke="#000"/>
</svg>
<!-- right instrument toolbar -->
<div class="a" style="left:998px;top:81px;width:24px;height:423px;background:#e0dfe3;border-right:1px solid #f4f4f6;border-bottom:1px solid #a5a5ab;"></div>
<div class="a hl" style="left:999px;top:85px;width:23px;background:#fff;"></div><div class="a hl" style="left:999px;top:86px;width:23px;background:#a5a5ab;"></div>
<div class="a hl" style="left:999px;top:89px;width:23px;background:#fff;"></div><div class="a hl" style="left:999px;top:90px;width:23px;background:#a5a5ab;"></div>
<div class="a hl" style="left:1000px;top:242px;width:20px;background:#a5a5ab;"></div><div class="a hl" style="left:1000px;top:243px;width:20px;background:#fff;"></div>
<div class="a hl" style="left:1000px;top:313px;width:20px;background:#a5a5ab;"></div><div class="a hl" style="left:1000px;top:314px;width:20px;background:#fff;"></div>
<div class="a hl" style="left:1000px;top:405px;width:20px;background:#a5a5ab;"></div><div class="a hl" style="left:1000px;top:406px;width:20px;background:#fff;"></div>
<div class="a hl" style="left:1000px;top:476px;width:20px;background:#a5a5ab;"></div><div class="a hl" style="left:1000px;top:477px;width:20px;background:#fff;"></div>
<svg style="left:0;top:0" width="1024" height="520" viewBox="0 0 1024 520">
<rect x="1007" y="97" width="8" height="11" fill="#f4f4f6" stroke="#000" stroke-width="1"/><rect x="1008" y="97" width="6" height="3" fill="#00c8e0"/><circle cx="1011" cy="104" r="2" fill="#fff" stroke="#000"/><path d="M1004.5,96v3" stroke="#ffe000" stroke-width="1.500"/><path d="M1015.5,96v3" stroke="#ffe000" stroke-width="1.500"/><path d="M1004.5,99v7q0,2.500 2.500,2.500h1.500" fill="none" stroke="#000" stroke-width="1.800"/><path d="M1016.5,99v8q0,1.500 -2.500,1.500" fill="none" stroke="#ff0000" stroke-width="1.800"/>
<rect x="1003.500" y="117.500" width="14" height="13" fill="#f4f4f6" stroke="#9d9da1" stroke-width="1"/><rect x="1004" y="118" width="13" height="5" fill="#00a020"/><path d="M1004,122.0l2.1666666666666665,-3.0l2.1666666666666665,3.0l2.1666666666666665,-3.0l2.1666666666666665,3.0l2.1666666666666665,-3.0l2.1666666666666665,3.0" fill="none" stroke="#003000" stroke-width="1.1"/><rect x="1007" y="124" width="2" height="1" fill="#000"/><rect x="1010" y="124" width="2" height="1" fill="#000"/><rect x="1013" y="124" width="2" height="1" fill="#000"/><rect x="1005" y="127" width="2" height="2" fill="#c00000"/><rect x="1009" y="127" width="2" height="2" fill="#000"/><rect x="1013" y="127" width="2" height="2" fill="#0000c0"/>
<rect x="1003.500" y="138.500" width="5" height="5" fill="#fff" stroke="#000"/><path d="M1004.5,142.5l3,-3" stroke="#ff0000"/><rect x="1012.500" y="138.500" width="5" height="5" fill="#fff" stroke="#000"/><path d="M1013.5,139.5l3,3" stroke="#0000ff"/><rect x="1003" y="145" width="15" height="7" fill="#ececf0"/><rect x="1004" y="148" width="2" height="2" fill="#c00000"/><rect x="1007" y="148" width="2" height="2" fill="#c00000"/><rect x="1012" y="148" width="2" height="2" fill="#0000c0"/><rect x="1015" y="148" width="2" height="2" fill="#0000c0"/><path d="M1004,149h5M1012,149h5" stroke="#000" stroke-width="0.800"/>
<rect x="1003.500" y="159.500" width="14" height="13" fill="#f4f4f6" stroke="#9d9da1" stroke-width="1"/><rect x="1004" y="160" width="10" height="8" fill="#f8f8ff"/><path d="M1004,163.5l1.6666666666666667,-3.0l1.6666666666666667,3.0l1.6666666666666667,-3.0l1.6666666666666667,3.0l1.6666666666666667,-3.0l1.6666666666666667,3.0" fill="none" stroke="#0000ff" stroke-width="1.1"/><path d="M1004,166.5l1.6666666666666667,-3.0l1.6666666666666667,3.0l1.6666666666666667,-3.0l1.6666666666666667,3.0l1.6666666666666667,-3.0l1.6666666666666667,3.0" fill="none" stroke="#ff0000" stroke-width="1.1"/><path d="M1015.5,159v3M1014,160.5h3" stroke="#ff0000" stroke-width="1.200"/><circle cx="1015.5" cy="165" r="1.200" fill="none" stroke="#000" stroke-width="0.800"/><rect x="1004" y="170" width="2" height="2" fill="#000"/><rect x="1007" y="170" width="2" height="2" fill="#0000c0"/><path d="M1004,171h5" stroke="#000" stroke-width="0.800"/>
<rect x="1003.500" y="180.500" width="14" height="13" fill="#f4f4f6" stroke="#9d9da1" stroke-width="1"/><rect x="1004" y="181" width="10" height="8" fill="#f8f8ff"/><path d="M1004,184.0l1.6666666666666667,-3.0l1.6666666666666667,3.0l1.6666666666666667,-3.0l1.6666666666666667,3.0l1.6666666666666667,-3.0l1.6666666666666667,3.0" fill="none" stroke="#00a000" stroke-width="1.1"/><path d="M1004,185.5l1.6666666666666667,-3.0l1.6666666666666667,3.0l1.6666666666666667,-3.0l1.6666666666666667,3.0l1.6666666666666667,-3.0l1.6666666666666667,3.0" fill="none" stroke="#0000ff" stroke-width="1.1"/><path d="M1004,187.0l1.6666666666666667,-3.0l1.6666666666666667,3.0l1.6666666666666667,-3.0l1.6666666666666667,3.0l1.6666666666666667,-3.0l1.6666666666666667,3.0" fill="none" stroke="#ff0000" stroke-width="1.1"/><path d="M1004,188.5l1.6666666666666667,-3.0l1.6666666666666667,3.0l1.6666666666666667,-3.0l1.6666666666666667,3.0l1.6666666666666667,-3.0l1.6666666666666667,3.0" fill="none" stroke="#e0c000" stroke-width="1.1"/><path d="M1015.5,180v3M1014,181.5h3" stroke="#ff0000" stroke-width="1.200"/><circle cx="1015.5" cy="186" r="1.200" fill="none" stroke="#000" stroke-width="0.800"/><rect x="1004" y="191" width="2" height="2" fill="#c00000"/><rect x="1007" y="191" width="2" height="2" fill="#0000c0"/><rect x="1010" y="191" width="2" height="2" fill="#008000"/><rect x="1013" y="191" width="2" height="2" fill="#c0a000"/><path d="M1004,192h11" stroke="#000" stroke-width="0.800"/>
<rect x="1003.500" y="201.500" width="14" height="13" fill="#f4f4f6" stroke="#9d9da1" stroke-width="1"/><rect x="1004" y="202" width="10" height="7" fill="#009080"/><path d="M1005,207l2,-4l1,4l2,-3h3M1005,205h8" fill="none" stroke="#002040" stroke-width="1"/><rect x="1015" y="204" width="2" height="2" fill="#000"/><rect x="1015" y="207" width="1" height="2" fill="#000"/><rect x="1004" y="212" width="2" height="2" fill="#c00000"/><rect x="1007" y="212" width="2" height="2" fill="#c00000"/><rect x="1010" y="212" width="2" height="2" fill="#008000"/><rect x="1013" y="212" width="2" height="2" fill="#008000"/><path d="M1004,213h11" stroke="#000" stroke-width="0.800"/>
<rect x="1003.500" y="222.500" width="14" height="13" fill="#f4f4f6" stroke="#9d9da1" stroke-width="1"/><rect x="1004" y="223" width="13" height="7" fill="#000"/><text x="1010.5" y="229.3" font-family="Liberation Sans, sans-serif" font-size="7" font-weight="bold" fill="#00ff00" text-anchor="middle" textLength="11" lengthAdjust="spacingAndGlyphs">123</text><rect x="1005" y="232" width="1.500" height="1.500" fill="#000"/><rect x="1008" y="232" width="1.500" height="1.500" fill="#000"/><rect x="1013" y="232" width="1.500" height="1.500" fill="#000"/>
<rect x="1003.500" y="250.500" width="14" height="14" fill="#f4f4f6" stroke="#9d9da1" stroke-width="1"/><rect x="1004" y="251" width="13" height="7" fill="#000"/><text x="1010.5" y="257.3" font-family="Liberation Sans, sans-serif" font-size="6.500" font-weight="bold" fill="#00ff00" text-anchor="middle" textLength="11.500" lengthAdjust="spacingAndGlyphs">1010</text><path d="M1005,260.5h11" stroke="#000" stroke-dasharray="1,2"/><path d="M1004,263.5h13" stroke="#000" stroke-dasharray="1,1"/>
<rect x="1005" y="271" width="13" height="14" fill="#000"/><rect x="1006" y="272" width="11" height="4" fill="#c00030"/><path d="M1006,274h2v2h5v-2h3" fill="none" stroke="#400010" stroke-width="1"/><path d="M1006,279l1.375,-2l1.375,2l1.375,-2l1.375,2l1.375,-2l1.375,2l1.375,-2l1.375,2" fill="none" stroke="#00e0ff" stroke-width="1.1"/><path d="M1006,282.5h2v-1.500h2v1.500h2v-1.500h2v1.500h2" fill="none" stroke="#00ff00" stroke-width="1.200"/><path d="M1003.5,272v13" stroke="#000" stroke-dasharray="1,1"/>
<rect x="1003.500" y="292.500" width="14" height="14" fill="#f4f4f6" stroke="#9d9da1" stroke-width="1"/><rect x="1004" y="293" width="13" height="8" fill="#000"/><path d="M1004.5,294.5h3.500q2,1.500 0,3.500h-3.500zM1010,296.5h2" fill="none" stroke="#00e0ff" stroke-width="1.200"/><text x="1012" y="300.3" font-family="Liberation Sans, sans-serif" font-size="6" font-weight="bold" fill="#00ff00">01</text><path d="M1007,303h7" stroke="#000" stroke-dasharray="1,2"/><path d="M1004,305.5h13" stroke="#000" stroke-dasharray="1,1"/>
<rect x="1003.500" y="321.500" width="14" height="13" fill="#f4f4f6" stroke="#9d9da1" stroke-width="1"/><rect x="1004" y="322" width="11" height="9" fill="#00282a"/><path d="M1004,324h11" stroke="#0040ff" stroke-width="1.500"/><path d="M1004,330q3,-4 11,-4" fill="none" stroke="#ff0000" stroke-width="1.200"/><path d="M1004,328h11" stroke="#008080" stroke-width="0.800"/><rect x="1016" y="323" width="1" height="2" fill="#000"/><rect x="1016" y="326" width="1" height="2" fill="#000"/><rect x="1008" y="332" width="2" height="2" fill="#c00000"/><rect x="1011" y="332" width="2" height="2" fill="#c00000"/><rect x="1014" y="332" width="2" height="2" fill="#c00000"/><path d="M1006,333h11" stroke="#c00000" stroke-width="0.800"/>
<rect x="1003.500" y="342.500" width="14" height="14" fill="#f4f4f6" stroke="#9d9da1" stroke-width="1"/><rect x="1004" y="343" width="13" height="7" fill="#000"/><text x="1009" y="349.3" font-family="Liberation Sans, sans-serif" font-size="6.500" font-weight="bold" fill="#00ff00" textLength="8" lengthAdjust="spacingAndGlyphs">.04</text><path d="M1007,352h7" stroke="#000" stroke-dasharray="1,2"/><circle cx="1015" cy="354.5" r="1.300" fill="#fff" stroke="#000" stroke-width="0.900"/>
<rect x="1003.500" y="363.500" width="14" height="14" fill="#ececf0" stroke="#9d9da1" stroke-width="1"/><rect x="1004" y="364" width="13" height="7" fill="#9c9ca0"/><path d="M1006,374.5h10" stroke="#b4b3b8" stroke-dasharray="1,1"/>
<rect x="1003.500" y="384.500" width="14" height="14" fill="#ececf0" stroke="#9d9da1" stroke-width="1"/><rect x="1004" y="385" width="9" height="8" fill="#9c9ca0"/><path d="M1015.5,386v9" stroke="#b4b3b8" stroke-dasharray="1,1"/><path d="M1011,396h5" stroke="#b4b3b8" stroke-dasharray="1,1"/>
<rect x="1004" y="413" width="13" height="5" fill="#00a020"/><path d="M1004,417.0l2.1666666666666665,-3.0l2.1666666666666665,3.0l2.1666666666666665,-3.0l2.1666666666666665,3.0l2.1666666666666665,-3.0l2.1666666666666665,3.0" fill="none" stroke="#002000" stroke-width="1.1"/><text x="1003" y="427" font-family="Liberation Sans, sans-serif" font-size="8" font-weight="bold" fill="#0000ff" textLength="10.500" lengthAdjust="spacingAndGlyphs">AG</text><path d="M1016,419v8" stroke="#000" stroke-width="2" stroke-dasharray="1,1"/>
<path d="M1003.5,442v-7.500h9" fill="none" stroke="#000" stroke-width="1.200"/><path d="M1007,441l6,-6" stroke="#0000ff" stroke-width="1.200"/><path d="M1015.5,434v3M1014,435.5h3" stroke="#ff0000" stroke-width="1.200"/><path d="M1015.5,438v3" stroke="#000"/><path d="M1004.5,443v5" stroke="#000" stroke-dasharray="1,1.500"/><text x="1007" y="448" font-family="Liberation Sans, sans-serif" font-size="8" font-weight="bold" fill="#0000ff" textLength="10.500" lengthAdjust="spacingAndGlyphs">AG</text>
<rect x="1003.5" y="455.5" width="11" height="7" fill="#f8f8ff" stroke="#9d9da1"/><path d="M1004,459.0l1.6666666666666667,-3.0l1.6666666666666667,3.0l1.6666666666666667,-3.0l1.6666666666666667,3.0l1.6666666666666667,-3.0l1.6666666666666667,3.0" fill="none" stroke="#0000ff" stroke-width="1.1"/><path d="M1004,461.5l1.6666666666666667,-3.0l1.6666666666666667,3.0l1.6666666666666667,-3.0l1.6666666666666667,3.0l1.6666666666666667,-3.0l1.6666666666666667,3.0" fill="none" stroke="#ff0000" stroke-width="1.1"/><path d="M1016,455v3M1014.5,456.5h3" stroke="#ff0000" stroke-width="1.200"/><circle cx="1016" cy="461" r="1.200" fill="none" stroke="#000" stroke-width="0.800"/><path d="M1003,466.5h4" stroke="#000" stroke-width="1.500" stroke-dasharray="1.500,1"/><text x="1007" y="469.5" font-family="Liberation Sans, sans-serif" font-size="8" font-weight="bold" fill="#0000ff" textLength="10.500" lengthAdjust="spacingAndGlyphs">AG</text>
<path d="M1005,494h11" stroke="#fff" stroke-width="1.500"/><rect x="1004" y="486" width="14" height="7" rx="2.500" fill="#9c9ca0"/><path d="M1013,493l-5,5h-2.500v-4" fill="none" stroke="#a3a3a7" stroke-width="1.200"/>
</svg>
<!-- mouse cursor -->
<svg style="left:995px;top:570px" width="14" height="22" viewBox="0 0 14 22"><path d="M0.500,0.500V17L4.300,13.300L7.300,20.300L10,19.200L7,12.300H12Z" fill="#fff" stroke="#000" stroke-width="1.100" stroke-linejoin="miter"/></svg>
<!-- tab -->
<div class="a" style="left:57px;top:726px;width:65px;height:24px;box-sizing:border-box;background:#e6e5ea;border-left:1px solid #fff;border-right:1px solid #000;border-bottom:1px solid #000;border-radius:0 0 4px 4px;box-shadow:inset -1px -1px 0 #8c8b86;"></div>
<svg style="left:61px;top:730px" width="16" height="16" viewBox="0 0 18 18">
<path d="M2,2 h5 l3,3 v8 h-8 z" fill="#f4f4f4" stroke="#c03040" stroke-width="0.8"/>
<polygon points="3,10 10,6 16,9 9,14" fill="#2838c0" stroke="#18206a" stroke-width="0.5"/>
<polygon points="3,10 9,14 9,16 3,12" fill="#8088a0"/><polygon points="9,14 16,9 16,11 9,16" fill="#505878"/>
<rect x="6" y="9" width="2" height="1.5" fill="#f0e040"/><rect x="10" y="8" width="2" height="1.5" fill="#f0e040"/>
</svg>
<div class="a" id="tabt" style="left:80.500px;top:731px;line-height:13px;font-size:11px;letter-spacing:-0.25px;">Circuit1</div>
<!-- tab scroll buttons -->
<div class="a" style="left:965px;top:732px;width:15px;height:15px;box-sizing:border-box;background:#e6e5ea;border:1px solid;border-color:#fff #77777c #77777c #fff;"></div>
<div class="a" style="left:980px;top:732px;width:15px;height:15px;box-sizing:border-box;background:#e6e5ea;border:1px solid;border-color:#fff #77777c #77777c #fff;"></div>
<svg style="left:965px;top:732px" width="30" height="15"><path d="M9,4 v7 l-4,-3.500 z M20,4 v7 l4,-3.500 z" fill="#000090"/></svg>
<!-- status bar -->
<div class="st" style="left:58px;width:433px;"></div>
<div class="st" style="left:493px;width:77px;letter-spacing:-0.25px;"><span id="cm">Circuit modified</span></div>
<div class="st" style="left:572px;width:87px;color:#aca899;">Tran: 0.071 us</div>
<div class="st" style="left:660px;width:190px;"></div>
<div class="st" style="left:852px;width:146px;letter-spacing:-0.2px;"><span id="ok">OnKeyUp( 17d )</span></div>
</div>
</body>
</html>
